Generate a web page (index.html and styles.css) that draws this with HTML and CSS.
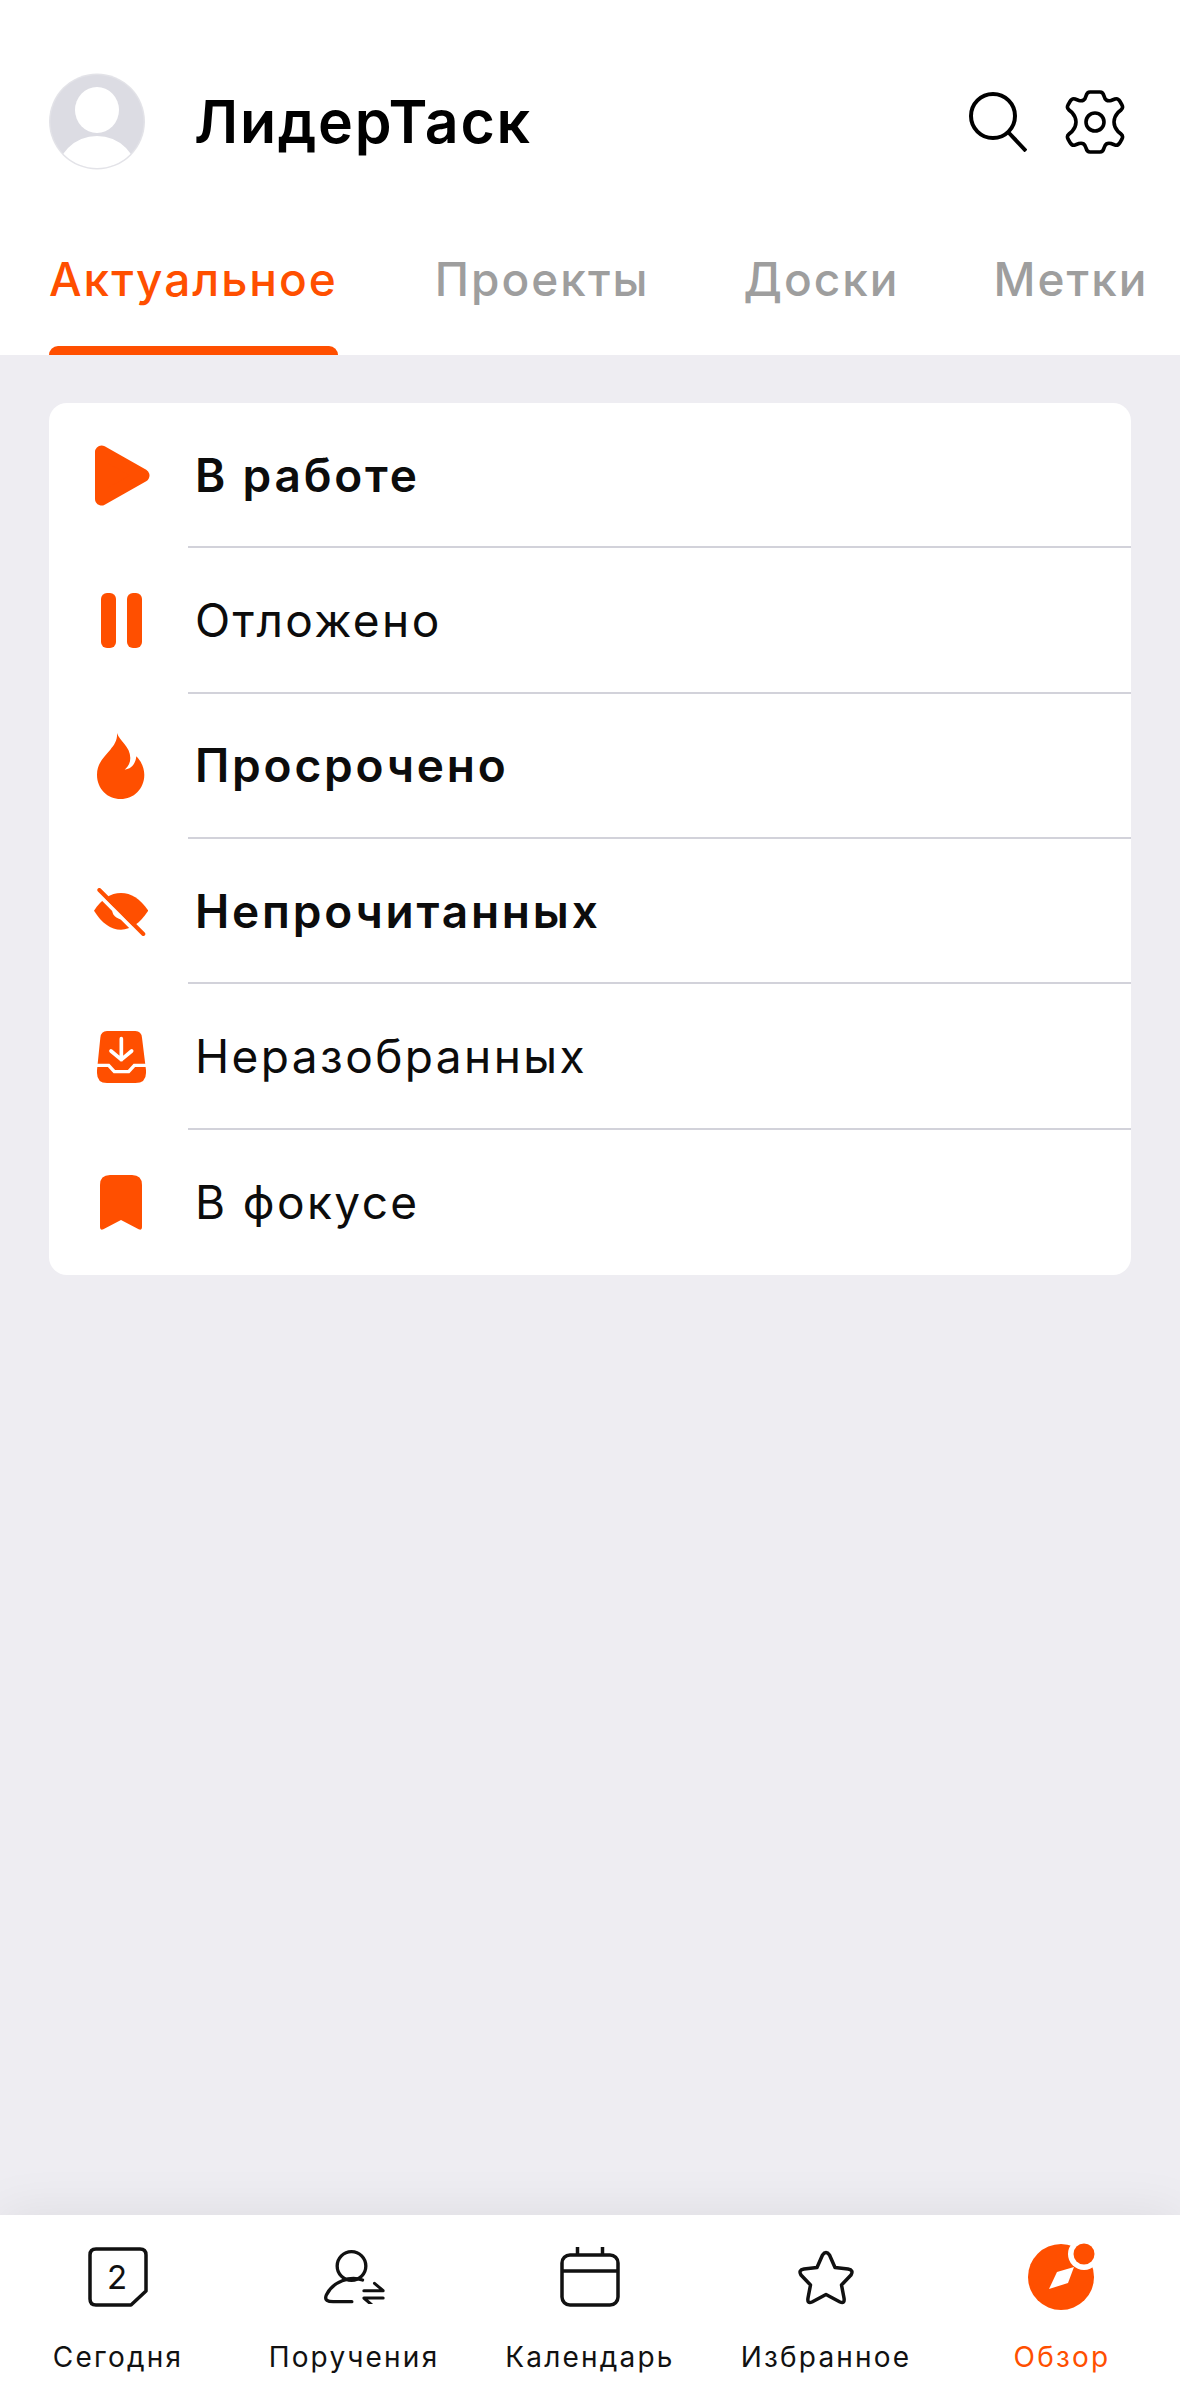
FILE: index.html
```html
<!DOCTYPE html>
<html lang="ru">
<head>
  <meta charset="UTF-8">
  <title>ЛидерТаск</title>
  <link rel="stylesheet" href="styles.css">
</head>
<body>
  <header class="header">
    <div class="top-row">
      <svg class="avatar" width="96" height="97" viewBox="0 0 96 97">
        <clipPath id="avatarClip"><circle cx="48" cy="48.5" r="46.5"/></clipPath>
        <circle cx="48" cy="48.5" r="48" fill="#e3e3e8"/>
        <circle cx="48" cy="48.5" r="46.5" fill="#dcdce3"/>
        <ellipse cx="48" cy="37" rx="22" ry="23" fill="#fff"/>
        <circle cx="48" cy="104" r="41" fill="#fff" clip-path="url(#avatarClip)"/>
      </svg>
      <h1 class="title">ЛидерТаск</h1>
      <div class="actions">
        <svg width="58" height="60" viewBox="0 0 58 60" fill="none" stroke="#000" stroke-width="4">
          <circle cx="24" cy="24" r="22"/>
          <path d="M40 41L57 59"/>
        </svg>
        <svg width="60" height="64" viewBox="-30 -32 60 64" fill="none" stroke="#000" stroke-width="3.6" stroke-linejoin="round">
          <path d="M-5 -30L5 -30Q8 -30 9 -26Q10.500 -20 16 -21.500L20 -23Q23 -24 25 -20.500L27 -17Q28.500 -14 26 -12L23 -9.500Q19 -5 19 0Q19 5 23 9.500L26 12Q28.500 14 27 17L25 20.500Q23 24 20 23L16 21.500Q10.500 20 9 26Q8 30 5 30L-5 30Q-8 30 -9 26Q-10.500 20 -16 21.500L-20 23Q-23 24 -25 20.500L-27 17Q-28.500 14 -26 12L-23 9.500Q-19 5 -19 0Q-19 -5 -23 -9.500L-26 -12Q-28.500 -14 -27 -17L-25 -20.500Q-23 -24 -20 -23L-16 -21.500Q-10.500 -20 -9 -26Q-8 -30 -5 -30Z"/>
          <circle cx="0" cy="0" r="9"/>
        </svg>
      </div>
    </div>
    <nav class="tabs">
      <a class="tab tab-active">Актуальное<span class="tab-line"></span></a>
      <a class="tab">Проекты</a>
      <a class="tab">Доски</a>
      <a class="tab">Метки</a>
    </nav>
  </header>

  <main class="content">
    <section class="card">
      <div class="row">
        <div class="row-icon">
          <svg width="60" height="61" viewBox="0 0 60 61" fill="#ff4f00" stroke="#ff4f00" stroke-width="13" stroke-linejoin="round">
            <path d="M10.500 7L52 30.500L10.500 54Z"/>
          </svg>
        </div>
        <div class="row-label bold">В работе</div>
      </div>
      <div class="row">
        <div class="row-icon">
          <svg width="41" height="55" viewBox="0 0 41 55" fill="#ff4f00">
            <rect width="15" height="55" rx="6"/>
            <rect x="26" width="15" height="55" rx="6"/>
          </svg>
        </div>
        <div class="row-label">Отложено</div>
      </div>
      <div class="row">
        <div class="row-icon">
          <svg width="47.300" height="66" viewBox="172 130 142 198" fill="#ff4f00">
            <path d="M232 130C240 155 272 170 272 205C272 220 265 232 255 240C275 238 288 222 290 200C305 215 314 235 314 255C314 298 282 328 243 328C204 328 172 298 172 255C172 220 195 200 212 180C225 165 234 150 232 130Z"/>
          </svg>
        </div>
        <div class="row-label bold">Просрочено</div>
      </div>
      <div class="row">
        <div class="row-icon">
          <svg width="54.300" height="48" viewBox="162 592 163 144" fill="none">
            <path d="M162 660C185 625 212 607 243 607C274 607 301 625 325 660C301 697 274 717 243 717C212 717 185 697 162 660Z" fill="#ff4f00"/>
            <path d="M218 650C212 672 228 688 258 688L230 650Z" fill="#fff"/>
            <path d="M170 606L304 740" stroke="#fff" stroke-width="12"/>
            <path d="M178 598L310 730" stroke="#ff4f00" stroke-width="12" stroke-linecap="round"/>
          </svg>
        </div>
        <div class="row-label bold">Непрочитанных</div>
      </div>
      <div class="row">
        <div class="row-icon">
          <svg width="49" height="52" viewBox="170 152 147 156" fill="none">
            <path d="M200 152H285Q303 152 305 172L317 270V278Q317 308 285 308H200Q170 308 170 278V270L180 172Q182 152 200 152Z" fill="#ff4f00"/>
            <path d="M168 255H205L222 274H265L282 255H319" stroke="#fff" stroke-width="10"/>
            <path d="M243 175V238M212 212L243 238L274 212" stroke="#fff" stroke-width="11" stroke-linecap="round" stroke-linejoin="round"/>
          </svg>
        </div>
        <div class="row-label">Неразобранных</div>
      </div>
      <div class="row row-last">
        <div class="row-icon">
          <svg width="42" height="55" viewBox="180 583 126 165" fill="#ff4f00">
            <path d="M210 583H276Q306 583 306 613V740Q306 750 296 746L243 718L190 746Q180 750 180 740V613Q180 583 210 583Z"/>
          </svg>
        </div>
        <div class="row-label">В фокусе</div>
      </div>
    </section>
  </main>

  <footer class="tabbar">
    <div class="bar-item">
      <div class="bar-icon">
        <svg width="60" height="60" viewBox="0 0 60 60" fill="none" stroke="#111" stroke-width="3.500" stroke-linejoin="round">
          <path d="M8 2H52Q58 2 58 8V44L43 58H8Q2 58 2 52V8Q2 2 8 2Z"/>
          <text class="day-num" x="29" y="42">2</text>
        </svg>
      </div>
      <span class="bar-label">Сегодня</span>
    </div>
    <div class="bar-item">
      <div class="bar-icon">
        <svg width="62" height="54" viewBox="970 178 185 162" fill="none" stroke="#111" stroke-width="10" stroke-linecap="round" stroke-linejoin="round">
          <circle cx="1055" cy="226" r="43"/>
          <path d="M1088 268C1050 255 1000 272 980 312C972 330 985 333 1000 333H1056"/>
          <path d="M1092 300H1150L1124 278M1150 322H1092L1116 343" stroke-width="9"/>
        </svg>
      </div>
      <span class="bar-label">Поручения</span>
    </div>
    <div class="bar-item">
      <div class="bar-icon">
        <svg width="60" height="60" viewBox="0 0 60 60" fill="none" stroke="#111" stroke-width="3.500">
          <rect x="2" y="8" width="56" height="50" rx="8"/>
          <path d="M2 24H58M17.500 0V8M42.500 0V8"/>
        </svg>
      </div>
      <span class="bar-label">Календарь</span>
    </div>
    <div class="bar-item">
      <div class="bar-icon">
        <svg width="58" height="55" viewBox="0 0 58 55" fill="none" stroke="#111" stroke-width="3.500" stroke-linejoin="round">
          <path d="M25.500 5Q29 0 32.500 5L38 17.500L51 19Q57 20 54 25L44.500 35L47 48Q48 54 43 52L29 44.500L15 52Q10 54 11 48L13.500 35L4 25Q1 20 7 19L20 17.500Z"/>
        </svg>
      </div>
      <span class="bar-label">Избранное</span>
    </div>
    <div class="bar-item bar-active">
      <div class="bar-icon">
        <svg width="68" height="68" viewBox="0 0 68 68" fill="#ff4f00">
          <circle cx="33" cy="34" r="33"/>
          <circle cx="56" cy="11" r="16" fill="#fff"/>
          <circle cx="56" cy="11" r="10.500"/>
          <path d="M21 46L29 29L46 24L40 40Z" fill="#fff"/>
        </svg>
      </div>
      <span class="bar-label">Обзор</span>
    </div>
  </footer>
</body>
</html>
```

FILE: styles.css
```css
body {
  font-family: Inter, "Noto Sans", sans-serif;
  color: #0c0c0c;
  background: #eeedf2;
  display: flex;
  flex-direction: column;
  height: 100vh;
  margin: 0;
  overflow: hidden;
}

.header {
  background: #fff;
  height: 355px;
  flex: none;
}

.top-row {
  display: flex;
  align-items: center;
  padding: 73px 55px 0 49px;
}

.title {
  font-size: 59px;
  font-weight: 600;
  letter-spacing: 1.700px;
  line-height: 97px;
  margin: 0 0 0 49px;
  color: #000;
}

.actions {
  display: flex;
  align-items: center;
  gap: 38px;
  margin-left: auto;
}

.tabs {
  display: flex;
  gap: 94px;
  padding: 81px 0 0 49px;
  height: 104px;
}

.tab {
  display: flex;
  flex-direction: column;
  font-size: 46px;
  font-weight: 500;
  letter-spacing: 2px;
  line-height: 56px;
  color: #9e9e9e;
}

.tab-active {
  color: #ff4f00;
  margin-right: 3px;
}

.tab-line {
  height: 9px;
  margin-top: auto;
  background: #ff4f00;
  border-radius: 9px 9px 0 0;
}

.content {
  flex: 1;
  padding: 48px 49px;
}

.card {
  background: #fff;
  border-radius: 18px;
}

.row {
  display: flex;
  height: 145.330px;
}

.row-icon {
  display: flex;
  align-items: center;
  justify-content: center;
  width: 144px;
  flex: none;
}

.row-label {
  flex: 1;
  display: flex;
  align-items: center;
  margin-left: -5px;
  padding-left: 7px;
  border-bottom: 2px solid #d2d2da;
  font-size: 46px;
  letter-spacing: 2.400px;
}

.row-last .row-label {
  border-bottom: none;
}

.bold {
  font-weight: 600;
  letter-spacing: 2.800px;
}

.tabbar {
  display: flex;
  height: 185px;
  flex: none;
  background: #fff;
  box-shadow: 0 0 50px rgba(0, 0, 0, 0.08);
}

.bar-item {
  flex: 1;
  display: flex;
  flex-direction: column;
  align-items: center;
}

.bar-icon {
  display: flex;
  align-items: center;
  justify-content: center;
  height: 68px;
  margin-top: 28px;
}

.bar-label {
  font-size: 28px;
  letter-spacing: 2.200px;
  line-height: 34px;
  margin-top: 29px;
  color: #111;
}

.bar-active .bar-label {
  color: #ff4f00;
}

.day-num {
  font-family: Inter, sans-serif;
  font-size: 33px;
  text-anchor: middle;
  fill: #111;
  stroke: none;
}
```
